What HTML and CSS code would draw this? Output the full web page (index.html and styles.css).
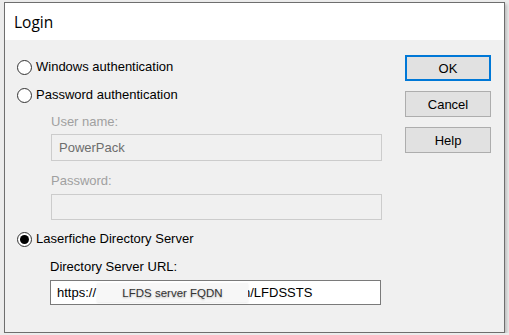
FILE: index.html
```html
<!DOCTYPE html>
<html lang="en">
<head>
    <meta charset="UTF-8">
    <title>Login</title>
    <link rel="stylesheet" href="styles.css">
</head>
<body>
    <div class="window">
        <div class="titlebar">Login</div>

        <div class="content">
            <div class="form">
                <div class="option first">
                    <span class="radio"></span>
                    <span>Windows authentication</span>
                </div>
                <div class="option second">
                    <span class="radio"></span>
                    <span>Password authentication</span>
                </div>

                <div class="sub disabled">
                    <div class="label user">User name:</div>
                    <div class="field user-field">PowerPack</div>
                    <div class="label pass">Password:</div>
                    <div class="field pass-field"></div>
                </div>

                <div class="option third">
                    <span class="radio checked"></span>
                    <span>Laserfiche Directory Server</span>
                </div>

                <div class="sub server">
                    <div class="label url">Directory Server URL:</div>
                    <div class="field url-field">
                        <span>https://</span><span class="redact">LFDS server FQDN</span><span class="tail">n/LFDSSTS</span>
                    </div>
                </div>
            </div>

            <div class="buttons">
                <button class="btn default">OK</button>
                <button class="btn">Cancel</button>
                <button class="btn">Help</button>
            </div>
        </div>
    </div>
</body>
</html>
```

FILE: styles.css
```css
body {
    margin: 0;
    background-color: #ececec;
    font-family: "Liberation Sans", Arial, sans-serif;
    font-size: 13px;
    color: #000;
}
.window {
    margin: 2px 0 0 4px;
    width: 501px;
    height: 331px;
    box-sizing: border-box;
    border: 1px solid #6e6e6e;
    background-color: #f0f0f0;
    box-shadow: 2px 2px 3px rgba(0, 0, 0, 0.2);
    display: flex;
    flex-direction: column;
}
.titlebar {
    height: 37px;
    background-color: #fff;
    padding-left: 9px;
    display: flex;
    align-items: center;
    font-family: "Open Sans", sans-serif;
    font-size: 15.5px;
}
.content {
    display: flex;
    padding: 15px 12px 0 12px;
}
.form {
    width: 365px;
    padding-top: 2px;
}
.option {
    display: flex;
    align-items: center;
    height: 20px;
    line-height: 16px;
}
.second {
    margin-top: 8px;
}
.third {
    margin-top: 9px;
}
.radio {
    box-sizing: border-box;
    width: 15px;
    height: 15px;
    border: 1.5px solid #333;
    border-radius: 50%;
    background-color: #fff;
    margin-right: 4px;
    display: flex;
    align-items: center;
    justify-content: center;
}
.radio.checked::after {
    content: "";
    width: 9px;
    height: 9px;
    border-radius: 50%;
    background-color: #000;
}
.sub {
    padding-left: 34px;
}
.label {
    line-height: 16px;
}
.user {
    margin-top: 9px;
}
.pass {
    margin-top: 12px;
}
.disabled .label {
    color: #a0a0a0;
}
.field {
    box-sizing: border-box;
    width: 331px;
    margin-top: 4px;
    padding-left: 7px;
    display: flex;
    align-items: center;
}
.disabled .field {
    border: 1px solid #cccccc;
    background-color: #f0f0f0;
    color: #6d6d6d;
}
.user-field {
    height: 27px;
}
.pass-field {
    height: 26px;
    margin-top: 5px;
}
.server {
    padding-left: 33px;
}
.url {
    margin-top: 10px;
}
.url-field {
    height: 25px;
    margin-top: 5px;
    border: 1px solid #7a7a7a;
    background-color: #fff;
    padding-left: 6px;
}
.redact {
    position: relative;
    z-index: 1;
    width: 151px;
    height: 19px;
    margin-left: 1px;
    background-color: #f7f7f7;
    box-shadow: 0 1px 2px rgba(0, 0, 0, 0.08);
    color: #333;
    font-size: 11.5px;
    display: flex;
    align-items: center;
    justify-content: center;
    text-shadow: 0 1px 2px rgba(0, 0, 0, 0.25);
}
.tail {
    margin-left: -5px;
}
.buttons {
    margin-left: 23px;
    display: flex;
    flex-direction: column;
    gap: 10px;
}
.btn {
    width: 86px;
    height: 26px;
    box-sizing: border-box;
    border: 1px solid #adadad;
    background-color: #e1e1e1;
    font-family: "Liberation Sans", Arial, sans-serif;
    font-size: 13px;
    color: #000;
    padding: 0;
}
.btn.default {
    border: 2px solid #0078d7;
}
```
